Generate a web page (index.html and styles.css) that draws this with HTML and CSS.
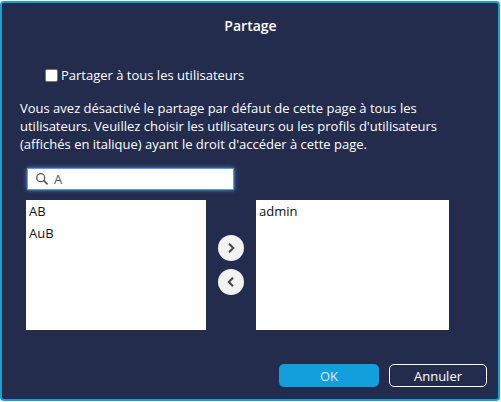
FILE: index.html
```html
<!DOCTYPE html>
<html lang="fr">
<head>
<meta charset="utf-8">
<title>Partage</title>
<link rel="stylesheet" href="styles.css">
</head>
<body>
<div class="dialog">
  <h1 class="title">Partage</h1>
  <label class="share-all"><span class="checkbox"></span><span>Partager à tous les utilisateurs</span></label>
  <p class="info">Vous avez désactivé le partage par défaut de cette page à tous les utilisateurs. Veuillez choisir les utilisateurs ou les profils d'utilisateurs (affichés en italique) ayant le droit d'accéder à cette page.</p>
  <div class="search">
    <svg class="search-icon" width="14" height="14" viewBox="0 0 14 14"><circle cx="5.7" cy="5.7" r="4" fill="none" stroke="#555" stroke-width="1.3"/><path d="M8.7 8.7L12.6 12.4" stroke="#555" stroke-width="1.6" fill="none"/></svg>
    <span class="search-text">A</span>
  </div>
  <div class="lists">
    <div class="list"><div class="item">AB</div><div class="item">AuB</div></div>
    <div class="arrows">
      <span class="arrow"><svg width="12" height="12" viewBox="0 0 12 12"><path d="M4 1.8L8.2 6L4 10.2" fill="none" stroke="#444" stroke-width="2"/></svg></span>
      <span class="arrow"><svg width="12" height="12" viewBox="0 0 12 12"><path d="M8 1.8L3.8 6L8 10.2" fill="none" stroke="#444" stroke-width="2"/></svg></span>
    </div>
    <div class="list list-right"><div class="item">admin</div></div>
  </div>
  <div class="actions">
    <button class="btn btn-ok">OK</button>
    <button class="btn btn-cancel">Annuler</button>
  </div>
</div>
</body>
</html>
```
FILE: styles.css
```css
html, body { margin: 0; padding: 0; background: #fff; }
body { font-family: "Open Sans", "Noto Sans", sans-serif; font-size: 13px; color: #fff; }
.dialog {
  box-sizing: border-box;
  width: 500px;
  height: 400px;
  margin-top: 1px;
  background: #242c4e;
  border: 2px solid #129fdb;
  border-radius: 4px;
  padding: 13px 18px 0 18px;
  display: flex;
  flex-direction: column;
}
.title { margin: 0 0 0 1px; font-size: 14px; font-weight: 600; line-height: 19px; text-align: center; }
.share-all { display: flex; align-items: center; gap: 3px; margin: 31px 0 0 25px; line-height: 18px; }
.checkbox { width: 11px; height: 11px; background: #fff; border: 1px solid #777; border-radius: 2px; }
.info { margin: 15px 0 0 0; line-height: 18px; width: 450px; }
.search {
  box-sizing: border-box;
  width: 207px;
  height: 22px;
  margin: 15px 0 0 7px;
  background: #fff;
  border: 1px solid #5b9dd9;
  box-shadow: 0 0 4px #5b9dd9;
  display: flex;
  align-items: center;
  padding-left: 7px;
  gap: 5px;
  color: #555;
}
.lists { display: flex; margin: 10px 0 0 6px; }
.list { box-sizing: border-box; width: 180px; height: 130px; background: #fff; color: #111; padding: 0 3px; }
.list-right { width: 193px; }
.item { line-height: 22px; }
.arrows { box-sizing: border-box; width: 50px; height: 130px; padding-bottom: 1px; display: flex; flex-direction: column; align-items: center; justify-content: center; gap: 8px; }
.arrow { width: 26px; height: 26px; border-radius: 50%; background: #f2f2f2; display: flex; align-items: center; justify-content: center; }
.actions { display: flex; justify-content: flex-end; gap: 10px; margin-top: 34px; margin-right: -7px; }
.btn { box-sizing: border-box; width: 100px; height: 23px; border-radius: 5px; font: inherit; color: #fff; padding: 0; }
.btn-ok { background: #129fdb; border: none; color: #dfeef8; }
.btn-cancel { width: 98px; background: transparent; border: 1px solid #fff; }
```
